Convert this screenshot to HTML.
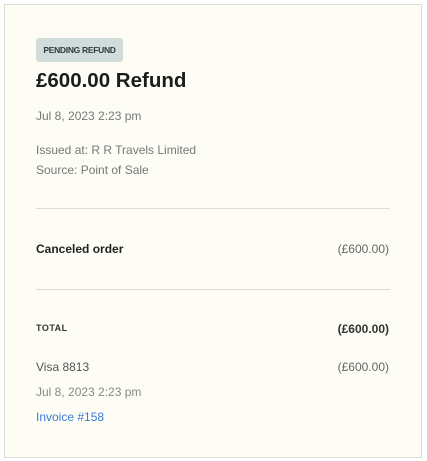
<!DOCTYPE html>
<html><head><style>
body{margin:0;background:#fff;font-family:"Liberation Sans",sans-serif;width:427px;height:461px;position:relative;overflow:hidden}
.card{position:absolute;left:4px;top:4px;width:416px;height:452px;border:1px solid #dcdcd4;background:#fdfdf6}
.t{position:absolute;white-space:nowrap}
.r{right:32px}
.hr{position:absolute;left:31px;width:354px;height:1px;background:#dcdcd4}
</style></head><body>
<div class="card">
<div class="t" style="left:31px;top:33px;width:87px;height:24px;background:#d1dbd9;border-radius:3px;font-size:8.5px;font-weight:bold;color:#2f3a3a;line-height:24px;text-align:center;letter-spacing:-0.3px">PENDING REFUND</div>
<div class="t" style="left:31px;top:64px;font-size:20.5px;font-weight:bold;color:#1c1c1c">£600.00 Refund</div>
<div class="t" style="left:31px;top:104px;font-size:12px;color:#777">Jul 8, 2023 2:23 pm</div>
<div class="t" style="left:31px;top:138px;font-size:12px;color:#777">Issued at: R R Travels Limited</div>
<div class="t" style="left:31px;top:158px;font-size:12px;color:#777">Source: Point of Sale</div>
<div class="hr" style="top:203px"></div>
<div class="t" style="left:31px;top:237px;font-size:12px;font-weight:bold;color:#222">Canceled order</div>
<div class="t r" style="top:237px;font-size:12px;color:#666">(£600.00)</div>
<div class="hr" style="top:284px"></div>
<div class="t" style="left:31px;top:318px;font-size:9px;font-weight:bold;color:#333;letter-spacing:0.5px">TOTAL</div>
<div class="t r" style="top:317px;font-size:12px;font-weight:bold;color:#333">(£600.00)</div>
<div class="t" style="left:31px;top:355px;font-size:12px;color:#555">Visa 8813</div>
<div class="t r" style="top:355px;font-size:12px;color:#666">(£600.00)</div>
<div class="t" style="left:31px;top:380px;font-size:12px;color:#888">Jul 8, 2023 2:23 pm</div>
<div class="t" style="left:31px;top:405px;font-size:12px;color:#3a7bd5">Invoice #158</div>
</div>
</body></html>
